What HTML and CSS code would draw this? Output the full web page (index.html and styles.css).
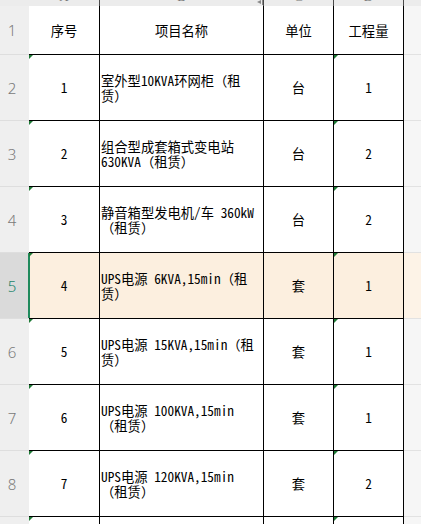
FILE: index.html
```html
<!DOCTYPE html>
<html lang="zh">
<head>
<meta charset="utf-8">
<link rel="stylesheet" href="styles.css">
</head>
<body>
<div class="sheet">
  <div class="corner"></div>
  <div class="colhead"><span>A</span></div>
  <div class="colhead"><span>B</span><svg class="resize" width="12" height="6" viewBox="0 0 12 6"><path d="M0 2 L4 0 L4 4 Z M12 2 L8 0 L8 4 Z" fill="#8a8a8a"/><rect x="5" y="0" width="1" height="5" fill="#8a8a8a"/><rect x="7" y="0" width="1" height="5" fill="#8a8a8a"/></svg></div>
  <div class="colhead"><span>C</span></div>
  <div class="colhead"><span>D</span></div>
  <div class="colhead rest"></div>

  <div class="rowhead">1</div>
  <div class="cell c">序号</div>
  <div class="cell c">项目名称</div>
  <div class="cell c">单位</div>
  <div class="cell c">工程量</div>
  <div class="extra"></div>

  <div class="rowhead">2</div>
  <div class="cell c mark">1</div>
  <div class="cell l"><span>室外型10KVA环网柜（租赁）</span></div>
  <div class="cell c">台</div>
  <div class="cell c mark">1</div>
  <div class="extra"></div>

  <div class="rowhead">3</div>
  <div class="cell c mark">2</div>
  <div class="cell l"><span>组合型成套箱式变电站630KVA（租赁）</span></div>
  <div class="cell c">台</div>
  <div class="cell c mark">2</div>
  <div class="extra"></div>

  <div class="rowhead">4</div>
  <div class="cell c mark">3</div>
  <div class="cell l"><span>静音箱型发电机/车 360kW（租赁）</span></div>
  <div class="cell c">台</div>
  <div class="cell c mark">2</div>
  <div class="extra"></div>

  <div class="rowhead sel">5</div>
  <div class="cell c mark selrow first">4</div>
  <div class="cell l selrow"><span>UPS电源 6KVA,15min（租赁）</span></div>
  <div class="cell c selrow">套</div>
  <div class="cell c mark selrow">1</div>
  <div class="extra selx"></div>

  <div class="rowhead">6</div>
  <div class="cell c mark">5</div>
  <div class="cell l"><span>UPS电源 15KVA,15min（租赁）</span></div>
  <div class="cell c">套</div>
  <div class="cell c mark">1</div>
  <div class="extra"></div>

  <div class="rowhead">7</div>
  <div class="cell c mark">6</div>
  <div class="cell l"><span>UPS电源 100KVA,15min（租赁）</span></div>
  <div class="cell c">套</div>
  <div class="cell c mark">1</div>
  <div class="extra"></div>

  <div class="rowhead">8</div>
  <div class="cell c mark">7</div>
  <div class="cell l"><span>UPS电源 120KVA,15min（租赁）</span></div>
  <div class="cell c">套</div>
  <div class="cell c mark">2</div>
  <div class="extra"></div>

  <div class="rowhead">9</div>
  <div class="cell c mark"></div>
  <div class="cell l"></div>
  <div class="cell c"></div>
  <div class="cell c mark"></div>
  <div class="extra"></div>
</div>
</body>
</html>
```
FILE: styles.css
```css
* { box-sizing: border-box; }
html, body { margin: 0; padding: 0; background: #ffffff; }
body { width: 421px; height: 524px; overflow: hidden; }

.sheet {
  display: grid;
  grid-template-columns: 29px 71px 164px 70px 70px 1fr;
  grid-template-rows: 6px 49px repeat(8, 66px);
  font-family: "Noto Sans Mono CJK SC", "Noto Sans CJK SC", monospace;
  font-size: 13.3px;
  color: #000;
}

.corner { background: #ececec; }
.colhead {
  position: relative;
  background: #ececec;
  border-right: 1px solid #4a4a4a;
  overflow: hidden;
  display: flex;
  justify-content: center;
  font-family: "Liberation Serif", serif;
  font-size: 13px;
  color: #777;
}
.colhead span { line-height: 13px; margin-top: -10px; }
.colhead.rest { border-right: none; }
.resize { position: absolute; right: -6px; top: 0; }

.rowhead {
  background: #efefef;
  border-bottom: 1px solid #dedede;
  display: flex;
  align-items: center;
  justify-content: center;
  padding-right: 5px;
  font-family: "Noto Sans", sans-serif;
  font-weight: 300;
  font-size: 15px;
  color: #7a7a7a;
}
.rowhead.sel {
  background: #dadada;
  color: #21856a;
  box-shadow: inset -1px 0 0 #1f8a5c;
}

.cell {
  position: relative;
  border-right: 1px solid #000;
  border-bottom: 1px solid #000;
  display: flex;
  align-items: center;
  line-height: 15px;
}
.cell.c { justify-content: center; }
.cell.l { padding: 0 6px 0 1px; }
.cell.l span { display: block; width: 100%; }

.mark::before {
  content: "";
  position: absolute;
  left: 0;
  top: 0;
  width: 0;
  height: 0;
  border-top: 4px solid #1e7a36;
  border-right: 4px solid transparent;
}

.selrow { background: #fcefdf; }
.selrow.first { box-shadow: inset 1px 0 0 #1f8a5c; }

.extra {
  background: #f6f6f6;
  border-bottom: 1px solid #e2e2e2;
}
.extra.selx { background: #fdf3e7; }
```
